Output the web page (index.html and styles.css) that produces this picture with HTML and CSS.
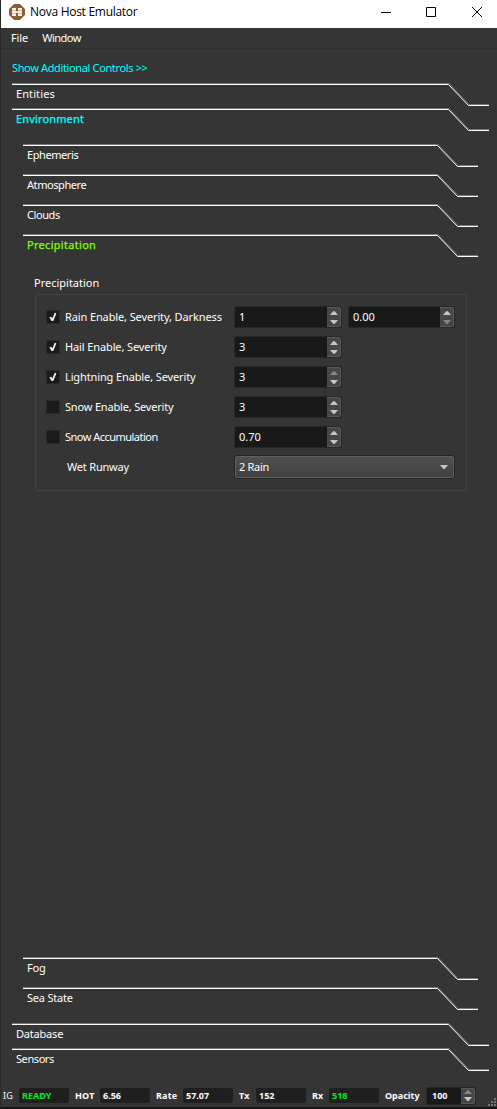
FILE: index.html
```html
<!DOCTYPE html>
<html lang="en">
<head>
<meta charset="utf-8">
<title>Nova Host Emulator</title>
<link rel="stylesheet" href="styles.css">
</head>
<body>
<svg class="defs" width="0" height="0">
  <defs>
    <symbol id="outer" viewBox="0 0 477 25">
      <path class="shade" d="M0 .5H437L457 21.5H477"/>
      <path class="line" d="M0 1.5H436.5L456.5 22.5H477"/>
    </symbol>
    <symbol id="inner" viewBox="0 0 455 25">
      <path class="shade" d="M0 .5H415L435 21.5H455"/>
      <path class="line" d="M0 1.5H414.5L434.5 22.5H455"/>
    </symbol>
    <symbol id="tick" viewBox="0 0 14 14">
      <path d="M3.3 7.2L5.2 6.7L6.3 8.6L8.7 2.8L10.4 3.2L7.3 11H5.6Z"/>
    </symbol>
    <symbol id="up" viewBox="0 0 8 4"><path d="M0 4L3 .5Q4 -.5 5 .5L8 4Z"/></symbol>
    <symbol id="down" viewBox="0 0 8 4"><path d="M0 0L3 3.5Q4 4.5 5 3.5L8 0Z"/></symbol>
  </defs>
</svg>
<div class="window">
  <header class="titlebar">
    <svg class="logo" width="16" height="16" viewBox="0 0 16 16">
      <path fill="#876237" d="M5 0H11L16 5V11L11 16H5L0 11V5Z"/>
      <path fill="#f5efe7" d="M3 4H7V7.200H9V4H13V12H9V9H7V12H3Z"/>
      <path stroke="#b99b78" stroke-width=".6" d="M3 6.5H7M3 9.500H7M9 6.500H13M9 9.500H13"/>
    </svg>
    <span class="title">Nova Host Emulator</span>
    <svg class="controls" width="102" height="12" viewBox="0 0 102 12">
      <path d="M0 6.5H10M45.5 1.500H54.500V10.500H45.500ZM91 1L101 11M101 1L91 11"/>
    </svg>
  </header>
  <nav class="menu"><span class="file">File</span><span class="win">Window</span></nav>
  <main class="content">
    <div class="more">Show Additional Controls &gt;&gt;</div>
    <div class="tab"><svg><use href="#outer"/></svg><span class="entities">Entities</span></div>
    <div class="tab"><svg><use href="#outer"/></svg><span class="environment">Environment</span></div>
    <section class="panel">
      <div class="subtab"><svg><use href="#inner"/></svg><span class="tight">Ephemeris</span></div>
      <div class="subtab"><svg><use href="#inner"/></svg><span class="tight">Atmosphere</span></div>
      <div class="subtab"><svg><use href="#inner"/></svg><span class="tight">Clouds</span></div>
      <div class="subtab"><svg><use href="#inner"/></svg><span class="precip">Precipitation</span></div>
      <div class="page">
        <div class="group-title">Precipitation</div>
        <div class="group">
          <div class="row"><i class="check"><svg><use href="#tick"/></svg></i><label>Rain Enable, Severity, Darkness</label><div class="spin"><b>1</b><i><svg><use href="#up"/></svg><svg><use href="#down"/></svg></i></div><div class="spin"><b>0.00</b><i><svg><use href="#up"/></svg><svg class="off"><use href="#down"/></svg></i></div></div>
          <div class="row"><i class="check"><svg><use href="#tick"/></svg></i><label>Hail Enable, Severity</label><div class="spin"><b>3</b><i><svg><use href="#up"/></svg><svg><use href="#down"/></svg></i></div></div>
          <div class="row"><i class="check"><svg><use href="#tick"/></svg></i><label>Lightning Enable, Severity</label><div class="spin"><b>3</b><i><svg class="off"><use href="#up"/></svg><svg><use href="#down"/></svg></i></div></div>
          <div class="row"><i class="check"></i><label class="snow">Snow Enable, Severity</label><div class="spin"><b>3</b><i><svg><use href="#up"/></svg><svg><use href="#down"/></svg></i></div></div>
          <div class="row"><i class="check"></i><label class="accumulation">Snow Accumulation</label><div class="spin"><b>0.70</b><i><svg><use href="#up"/></svg><svg><use href="#down"/></svg></i></div></div>
          <div class="row"><label class="wet">Wet Runway</label><div class="combo"><b>2 Rain</b><svg><use href="#down"/></svg></div></div>
        </div>
      </div>
      <div class="subtab"><svg><use href="#inner"/></svg><span class="snug">Fog</span></div>
      <div class="subtab"><svg><use href="#inner"/></svg><span class="snug">Sea State</span></div>
    </section>
    <div class="tab"><svg><use href="#outer"/></svg><span class="snug">Database</span></div>
    <div class="tab"><svg><use href="#outer"/></svg><span class="tight">Sensors</span></div>
  </main>
  <footer class="status">
    <span class="name ig">IG</span><span class="field ok ready">READY</span>
    <span class="name hot">HOT</span><span class="field">6.56</span>
    <span class="name rate">Rate</span><span class="field">57.07</span>
    <span class="name tx">Tx</span><span class="field">152</span>
    <span class="name rx">Rx</span><span class="field ok">518</span>
    <span class="name opacity">Opacity</span>
    <div class="spin small"><b>100</b><i><svg class="off"><use href="#up"/></svg><svg><use href="#down"/></svg></i></div>
    <svg class="grip" width="8" height="8" viewBox="0 0 8 8"><path d="M6 0h2v2h-2zM3 3h2v2h-2zM6 3h2v2h-2zM0 6h2v2h-2zM3 6h2v2h-2zM6 6h2v2h-2z"/></svg>
  </footer>
</div>
</body>
</html>
```
FILE: styles.css
```css
* { box-sizing: border-box; }
body { margin: 0; background: #353535; color: #fff; font: 11px/16px "Noto Sans", "Open Sans", sans-serif; }
svg { display: block; flex: none; }
.defs { position: absolute; }
b, i { font-weight: normal; font-style: normal; }
span, label, b, .more, .group-title { white-space: nowrap; }
.shade, .line { fill: none; stroke: #777; }
.line { stroke: #fff; }
.window { display: flex; flex-direction: column; width: 497px; height: 1109px; border-left: 1px solid #292929; border-bottom: 2px solid #171517; }
.titlebar { display: flex; align-items: center; height: 28px; padding: 0 14px 4px 8px; background: #fff; color: #000; }
.title { margin-left: 5px; flex: 1; font: 12px/16px "Open Sans", sans-serif; letter-spacing: -.28px; }
.controls { fill: none; stroke: #000; }
.menu { display: flex; gap: 14px; height: 21px; padding: 2px 10px; border-bottom: 1px solid #2e2e2e; }
.file { letter-spacing: -.1px; }
.win { letter-spacing: -.5px; }
.content { flex: 1; display: flex; flex-direction: column; padding: 11px 7px 9px 11px; }
.more { height: 23px; color: #00ffff; letter-spacing: -.36px; }
.tab, .subtab { display: grid; height: 25px; flex: none; }
.subtab { height: 30px; }
.tab > *, .subtab > * { grid-area: 1 / 1; }
.tab svg { width: 477px; height: 25px; }
.subtab svg { width: 455px; height: 25px; }
.tab span, .subtab span { padding: 3px 0 0 4px; }
.tight { letter-spacing: -.42px; }
.snug { letter-spacing: -.2px; }
.entities { letter-spacing: .1px; }
.environment { color: #00ffff; letter-spacing: .15px; -webkit-text-stroke: .25px; }
.precip { color: #7fff00; letter-spacing: .3px; -webkit-text-stroke: .25px; }
.panel { flex: 1; display: flex; flex-direction: column; padding: 11px 11px 6px; }
.page { flex: 1; padding: 11px 11px 0; }
.group { width: 432px; height: 197px; margin: 3px 0 0 1px; padding: 7px 11px 0 10px; border: 1px solid #424242; border-radius: 2px; }
.row { display: flex; align-items: center; height: 30px; }
.check { width: 14px; height: 14px; margin-right: 5px; background: #1a1a1a; border: 1px solid #2a2a2a; }
.check svg { width: 14px; height: 14px; margin: -1px; fill: #eee; }
label { width: 169px; letter-spacing: -.12px; }
.snow { letter-spacing: -.18px; }
.accumulation { letter-spacing: -.52px; }
.wet { width: 188px; padding-left: 21px; letter-spacing: -.2px; }
.spin { display: flex; width: 108px; height: 22px; margin-right: 6px; background: #191919; border: 1px solid #272727; border-radius: 2px; }
.spin + .spin { width: 107px; margin-right: 0; }
.spin b { flex: 1; padding: 2px 0 0 4px; }
.spin i { display: flex; flex-direction: column; align-items: center; justify-content: center; gap: 5px; width: 14px; background: #464646; border: 1px solid #5a5a5a; border-left: 0; border-radius: 0 2px 2px 0; }
.spin svg, .combo svg { width: 8px; height: 4px; fill: #c6c6c6; }
.spin .off { fill: #858585; }
.combo { display: flex; align-items: center; width: 221px; height: 24px; padding: 0 6px 0 4px; border: 1px solid #232323; border-radius: 3px; box-shadow: inset 0 0 0 1px #606060; background: linear-gradient(#505050, #404040); }
.combo b { flex: 1; letter-spacing: -.3px; }
.status { display: flex; align-items: center; height: 25px; font: bold 9px/12px "Noto Sans", "Open Sans", sans-serif; padding: 3px 1px 1px 2px; }
.name { flex: none; letter-spacing: .2px; }
.ig { width: 16px; font-weight: normal; }
.hot { width: 25px; }
.rate { width: 27px; }
.tx { width: 17px; }
.rx { width: 17px; }
.opacity { width: 41px; letter-spacing: 0; }
.field { flex: none; width: 50px; height: 15px; margin-right: 6px; padding: 2px 0 0 3px; background: #1f1f1f; border-radius: 2px; }
.ok { color: #00ee18; }
.small { width: 50px; height: 18px; margin-right: 12px; }
.small b { padding: 2px 0 0 5px; font-weight: bold; }
.small i { gap: 3px; }
.grip { fill: #777; align-self: flex-end; }
```
